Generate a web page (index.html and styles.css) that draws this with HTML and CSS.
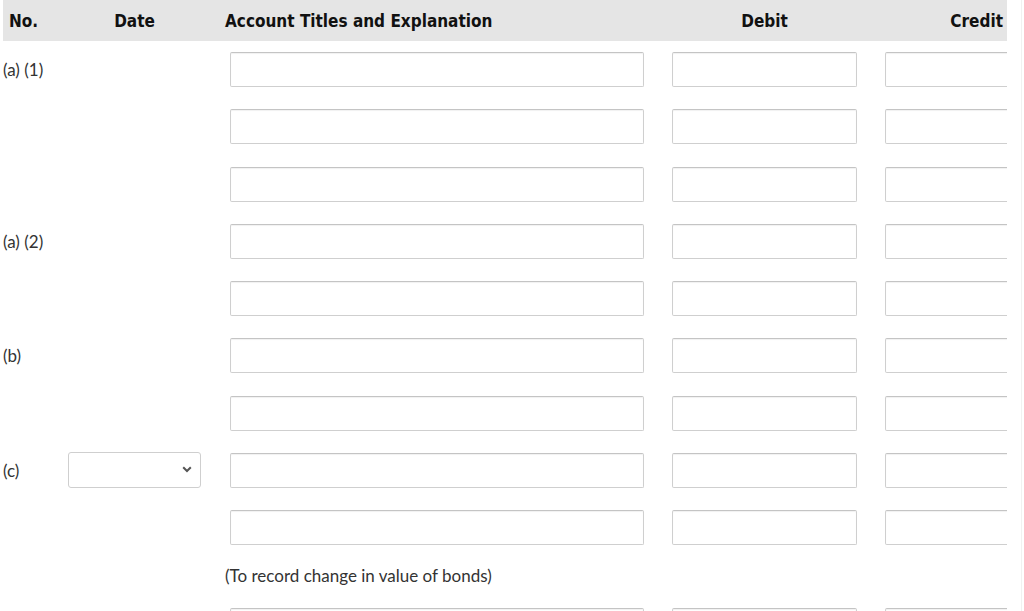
FILE: index.html
```html
<!DOCTYPE html>
<html>
<head>
<meta charset="utf-8">
<link rel="stylesheet" href="styles.css">
</head>
<body>
<div class="page">
  <div class="sheet">
    <div class="grid head">
      <div class="h-no">No.</div>
      <div class="h-date">Date</div>
      <div class="h-acct">Account Titles and Explanation</div>
      <div class="h-debit">Debit</div>
      <div class="h-credit">Credit</div>
    </div>
    <div class="rows">
      <div class="grid row"><div class="lbl">(a) (1)</div><div></div><div class="c-acct"><input class="in acct"></div><div class="c-num"><input class="in num"></div><div class="c-num"><input class="in num"></div></div>
      <div class="grid row"><div class="lbl"></div><div></div><div class="c-acct"><input class="in acct"></div><div class="c-num"><input class="in num"></div><div class="c-num"><input class="in num"></div></div>
      <div class="grid row"><div class="lbl"></div><div></div><div class="c-acct"><input class="in acct"></div><div class="c-num"><input class="in num"></div><div class="c-num"><input class="in num"></div></div>
      <div class="grid row"><div class="lbl">(a) (2)</div><div></div><div class="c-acct"><input class="in acct"></div><div class="c-num"><input class="in num"></div><div class="c-num"><input class="in num"></div></div>
      <div class="grid row"><div class="lbl"></div><div></div><div class="c-acct"><input class="in acct"></div><div class="c-num"><input class="in num"></div><div class="c-num"><input class="in num"></div></div>
      <div class="grid row"><div class="lbl">(b)</div><div></div><div class="c-acct"><input class="in acct"></div><div class="c-num"><input class="in num"></div><div class="c-num"><input class="in num"></div></div>
      <div class="grid row"><div class="lbl"></div><div></div><div class="c-acct"><input class="in acct"></div><div class="c-num"><input class="in num"></div><div class="c-num"><input class="in num"></div></div>
      <div class="grid row"><div class="lbl">(c)</div>
        <div class="c-date"><div class="sel"><svg class="chev" width="10" height="7" viewBox="0 0 10 7"><path d="M1.2 1.2 L5 5 L8.8 1.2" fill="none" stroke="#555" stroke-width="2"/></svg></div></div>
        <div class="c-acct"><input class="in acct"></div><div class="c-num"><input class="in num"></div><div class="c-num"><input class="in num"></div></div>
      <div class="grid row"><div class="lbl"></div><div></div><div class="c-acct"><input class="in acct"></div><div class="c-num"><input class="in num"></div><div class="c-num"><input class="in num"></div></div>
      <div class="grid note"><div></div><div></div><div class="note-text">(To record change in value of bonds)</div><div></div><div></div></div>
      <div class="grid row"><div class="lbl"></div><div></div><div class="c-acct"><input class="in acct"></div><div class="c-num"><input class="in num"></div><div class="c-num"><input class="in num"></div></div>
    </div>
  </div>
</div>
</body>
</html>
```

FILE: styles.css
```css
html, body {
  margin: 0;
  padding: 0;
  background: #fff;
}
.page {
  width: 1022px;
  height: 611px;
  overflow: hidden;
  border-right: 1px solid #f1f1f1;
  padding-left: 3px;
  box-sizing: border-box;
}
.sheet {
  width: 1004px;
  overflow: hidden;
  height: 611px;
}
.grid {
  display: grid;
  grid-template-columns: 62px 160px 447px 213px 122px;
  align-items: center;
}
.head {
  height: 41px;
  background: #e5e5e5;
  font-family: "DejaVu Sans Condensed", "DejaVu Sans", sans-serif;
  font-weight: bold;
  font-size: 17px;
  color: #111;
}
.h-no { padding-left: 6px; }
.h-date { margin-left: 3px; width: 133px; text-align: center; }
.h-debit { width: 185px; text-align: center; }
.h-credit { text-align: right; padding-right: 4px; }
.rows {
  display: flex;
  flex-direction: column;
  gap: 22.25px;
  padding-top: 11px;
}
.row {
  height: 35px;
  font-family: Lato, "Liberation Sans", sans-serif;
  font-size: 17px;
  color: #333;
}
.lbl { white-space: nowrap; }
.c-acct, .c-num, .c-date {
  display: flex;
  height: 35px;
}
.c-acct { padding-left: 5px; }
.c-date { padding-left: 3px; }
.in {
  box-sizing: border-box;
  height: 35px;
  border: 1px solid #cfcfcf;
  border-top-color: #c4c4c4;
  border-radius: 2px;
  box-shadow: inset 0 1px 1px rgba(0, 0, 0, 0.06);
  background: #fff;
  margin: 0;
  padding: 0;
  flex: none;
}
.acct { width: 414px; }
.num { width: 185px; }
.sel {
  box-sizing: border-box;
  width: 133px;
  height: 36px;
  margin-top: -1px;
  border: 1px solid #cfcfcf;
  border-radius: 3px;
  background: #fff;
  display: flex;
  align-items: center;
  justify-content: flex-end;
  padding-right: 8px;
}
.chev { display: block; }
.note {
  height: 18.5px;
  font-family: Lato, "Liberation Sans", sans-serif;
  font-size: 17px;
  line-height: 18.5px;
  color: #333;
}
.note-text { white-space: nowrap; }
```
